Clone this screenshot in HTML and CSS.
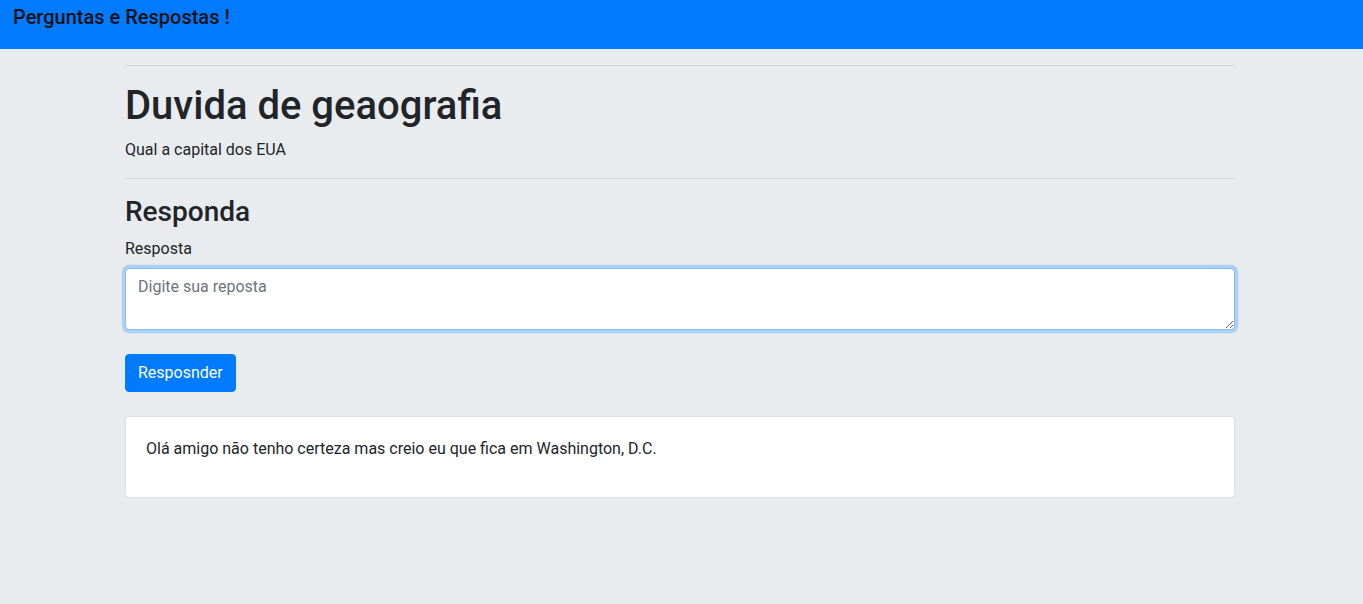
FILE: index.html
```html
<!DOCTYPE html>
<html lang="pt">
<head>
<meta charset="utf-8">
<title>Perguntas e Respostas</title>
<link rel="stylesheet" href="styles.css">
</head>
<body>
<nav class="navbar">
  <span class="brand">Perguntas e Respostas !</span>
</nav>
<main class="container">
  <hr class="rule">
  <h1 class="title">Duvida de geaografia</h1>
  <p class="desc">Qual a capital dos EUA</p>
  <hr class="rule">
  <h3 class="subtitle">Responda</h3>
  <form class="form">
    <label class="label" for="resposta">Resposta</label>
    <textarea id="resposta" class="field" rows="2" placeholder="Digite sua reposta"></textarea>
    <button type="button" class="btn">Resposnder</button>
  </form>
  <div class="card">
    <p class="card-text">Olá amigo não tenho certeza mas creio eu que fica em Washington, D.C.</p>
  </div>
</main>
</body>
</html>
```
FILE: styles.css
```css
* { box-sizing: border-box; }
html, body { margin: 0; padding: 0; }
body {
  background: #e9ecef;
  color: #212529;
  font-family: Roboto, "Liberation Sans", sans-serif;
  font-size: 16px;
  line-height: 1.5;
}
.navbar {
  background: #007bff;
  height: 49px;
  padding: 2px 13px;
}
.brand {
  font-size: 20px;
  font-weight: 500;
  line-height: 30px;
  color: #111;
}
.container {
  width: 1110px;
  margin-left: calc(50% - 556.5px);
}
.rule {
  margin: 16px 0;
  border: 0;
  border-top: 1px solid rgba(0,0,0,.1);
  height: 0;
}
.title {
  font-size: 40px;
  font-weight: 500;
  line-height: 1.2;
  margin: 0 0 8px;
}
.desc { margin: 0 0 16px; }
.subtitle {
  font-size: 28px;
  font-weight: 500;
  line-height: 1.2;
  margin: 0 0 8px;
}
.form { display: flex; flex-direction: column; align-items: flex-start; }
.label { margin-bottom: 7.4px; }
.field {
  display: block;
  width: 100%;
  padding: 6px 12px;
  font: inherit;
  line-height: 1.5;
  color: #495057;
  background: #fff;
  border: 1px solid #80bdff;
  border-radius: 4px;
  box-shadow: 0 0 0 3.2px rgba(0,123,255,.25);
  outline: 0;
  margin-bottom: 24px;
  height: 62px;
}
.field::placeholder { color: #6c757d; }
.btn {
  font: inherit;
  line-height: 1.5;
  color: #fff;
  background: #007bff;
  border: 1px solid #007bff;
  border-radius: 4px;
  padding: 6px 12px;
  margin-bottom: 24px;
}
.card {
  background: #fff;
  border: 1px solid rgba(0,0,0,.125);
  border-radius: 4px;
  padding: 20px;
}
.card-text { margin: 0 0 16px; }
```
